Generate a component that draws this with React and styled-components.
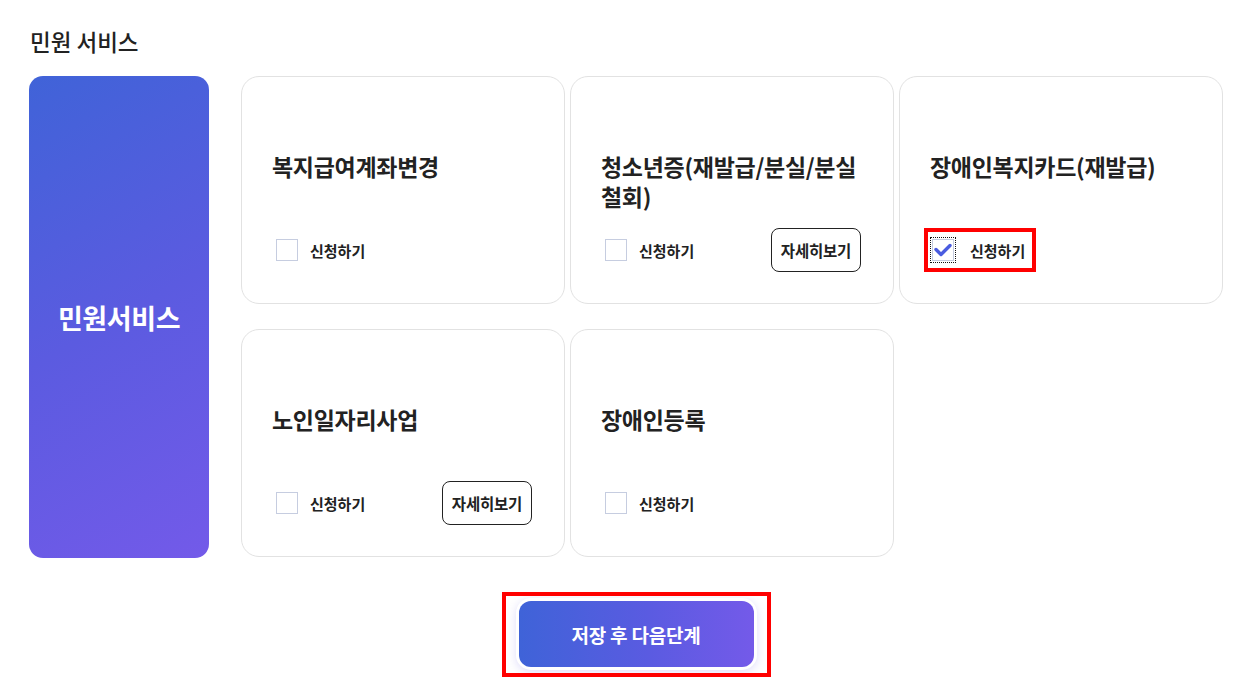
import React, { useState } from "react";
import styled, { createGlobalStyle } from "styled-components";

const GlobalStyle = createGlobalStyle`
    body {
        margin: 0;
        background: #fff;
        font-family: "Noto Sans CJK KR", "Noto Sans", sans-serif;
        color: #222;
    }
`;

const Page = styled.div`
    padding: 25px 22px 0 29px;
`;

const Heading = styled.h2`
    margin: 0 0 19px 1px;
    font-size: 22.5px;
    font-weight: 500;
    line-height: 32px;
    color: #222;
`;

const Body = styled.div`
    display: flex;
    gap: 32px;
`;

const Sidebar = styled.div`
    width: 180px;
    height: 482px;
    border-radius: 14px;
    background: linear-gradient(150deg, #4063d8 0%, #5b5be0 50%, #735ae9 100%);
    display: flex;
    align-items: center;
    justify-content: center;
    color: #fff;
    font-size: 27px;
    font-weight: 700;
    letter-spacing: -0.4px;
`;

const Grid = styled.div`
    display: grid;
    grid-template-columns: repeat(3, 324px);
    grid-auto-rows: 228px;
    column-gap: 5px;
    row-gap: 25px;
`;

const Card = styled.div`
    box-sizing: border-box;
    border: 1px solid #e2e2e2;
    border-radius: 18px;
    padding: 74px 32px 0 30px;
    display: flex;
    flex-direction: column;
`;

const Title = styled.div`
    min-height: 60px;
    font-size: 23px;
    font-weight: 700;
    line-height: 30px;
    letter-spacing: -0.3px;
    color: #222;
`;

const Actions = styled.div`
    margin-top: 17px;
    height: 44px;
    display: flex;
    align-items: center;
    justify-content: space-between;
`;

const Check = styled.label`
    display: flex;
    align-items: center;
    gap: ${(p) => (p.$marked ? "16px" : "12px")};
    padding: ${(p) => (p.$marked ? "7px 7px 7px 4px" : "4px")};
    margin-left: ${(p) => (p.$marked ? "-2px" : "0")};
    font-size: 15px;
    font-weight: 700;
    color: #222;
    cursor: pointer;
    outline: ${(p) => (p.$marked ? "4px solid #ff0000" : "none")};
`;

const Box = styled.span`
    box-sizing: border-box;
    width: 22px;
    height: 22px;
    border: 1px solid #c6cde0;
    background: #fff;
    display: flex;
    align-items: center;
    justify-content: center;
    outline: ${(p) => (p.$checked ? "1px dotted #111" : "none")};
    outline-offset: 1px;
`;

const DetailButton = styled.button`
    width: 90px;
    height: 44px;
    border: 1px solid #222;
    border-radius: 8px;
    background: #fff;
    font-family: inherit;
    font-size: 15.5px;
    font-weight: 700;
    color: #222;
    letter-spacing: -0.2px;
    padding: 0;
`;

const Footer = styled.div`
    display: flex;
    justify-content: center;
    padding-top: 34px;
`;

const SubmitWrap = styled.div`
    padding: 9px 17px 10px;
    outline: 4px solid #ff0000;
    outline-offset: -4px;
    margin-left: 20px;
`;

const SubmitButton = styled.button`
    display: block;
    width: 235px;
    height: 66px;
    border: none;
    border-radius: 12px;
    background: linear-gradient(90deg, #3f63d8 0%, #5a5be1 55%, #745ae9 100%);
    box-shadow: 0 0 0 3px #fff, 0 2px 10px 3px rgba(110, 100, 230, 0.22);
    color: #fff;
    font-family: inherit;
    font-size: 19px;
    font-weight: 700;
    letter-spacing: -0.2px;
`;

const services = [
    { title: "복지급여계좌변경" },
    { title: "청소년증(재발급/분실/분실 철회)", detail: true },
    { title: "장애인복지카드(재발급)", checked: true },
    { title: "노인일자리사업", detail: true },
    { title: "장애인등록" },
];

function CheckMark() {
    return (
        <svg width="18" height="14" viewBox="0 0 18 14">
            <path
                d="M2 6.5 L7 11.5 L16 2.5"
                fill="none"
                stroke="#4a5ce0"
                strokeWidth="3.4"
                strokeLinecap="round"
                strokeLinejoin="round"
            />
        </svg>
    );
}

export default function App() {
    const [checked, setChecked] = useState(services.map((s) => !!s.checked));

    const toggle = (i) =>
        setChecked((prev) => prev.map((v, j) => (j === i ? !v : v)));

    return (
        <Page>
            <GlobalStyle />
            <Heading>민원 서비스</Heading>
            <Body>
                <Sidebar>민원서비스</Sidebar>
                <Grid>
                    {services.map((s, i) => (
                        <Card key={s.title}>
                            <Title>{s.title}</Title>
                            <Actions>
                                <Check $marked={s.checked} onClick={() => toggle(i)}>
                                    <Box $checked={checked[i]}>
                                        {checked[i] && <CheckMark />}
                                    </Box>
                                    신청하기
                                </Check>
                                {s.detail && <DetailButton>자세히보기</DetailButton>}
                            </Actions>
                        </Card>
                    ))}
                </Grid>
            </Body>
            <Footer>
                <SubmitWrap>
                    <SubmitButton>저장 후 다음단계</SubmitButton>
                </SubmitWrap>
            </Footer>
        </Page>
    );
}
